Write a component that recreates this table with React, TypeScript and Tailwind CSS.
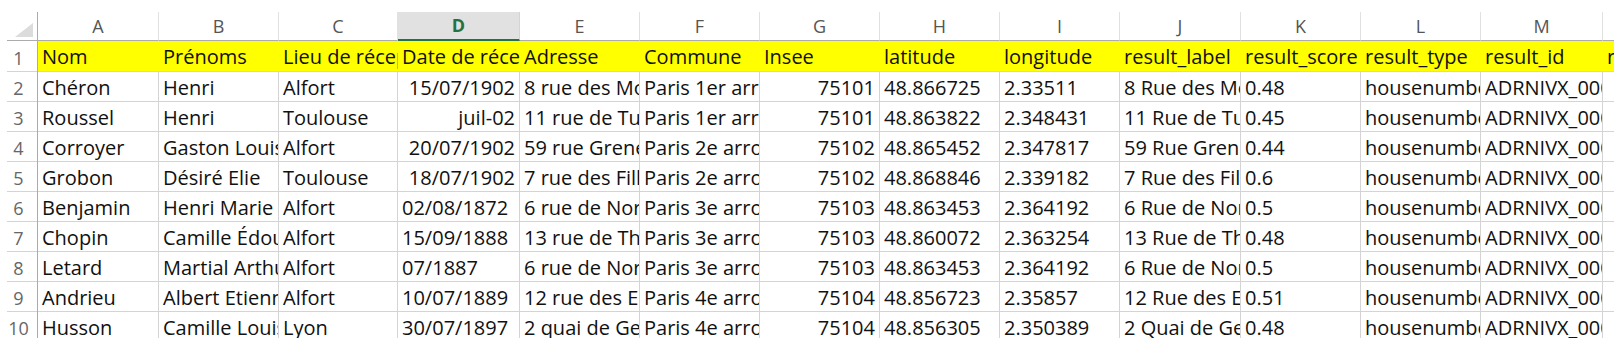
import React from "react";

// Excel-like sheet: geocoded list of names / addresses

type Cell = { v: string; right?: boolean };

const COLS = [
  { key: "A", w: "w-[121px]" },
  { key: "B", w: "w-[120px]" },
  { key: "C", w: "w-[119px]" },
  { key: "D", w: "w-[122px]" },
  { key: "E", w: "w-[120px]" },
  { key: "F", w: "w-[120px]" },
  { key: "G", w: "w-[120px]" },
  { key: "H", w: "w-[120px]" },
  { key: "I", w: "w-[120px]" },
  { key: "J", w: "w-[121px]" },
  { key: "K", w: "w-[120px]" },
  { key: "L", w: "w-[120px]" },
  { key: "M", w: "w-[122px]" },
];

const HEADERS = [
  "Nom",
  "Prénoms",
  "Lieu de réception",
  "Date de réception",
  "Adresse",
  "Commune",
  "Insee",
  "latitude",
  "longitude",
  "result_label",
  "result_score",
  "result_type",
  "result_id",
];

const l = (v: string): Cell => ({ v });
const r = (v: string): Cell => ({ v, right: true });

const ROWS: Cell[][] = [
  [l("Chéron"), l("Henri"), l("Alfort"), r("15/07/1902"), l("8 rue des Moulins"), l("Paris 1er arrondissement"), r("75101"), l("48.866725"), l("2.33511"), l("8 Rue des Moulins 75001 Paris"), l("0.48"), l("housenumber"), l("ADRNIVX_0000000270")],
  [l("Roussel"), l("Henri"), l("Toulouse"), r("juil-02"), l("11 rue de Turbigo"), l("Paris 1er arrondissement"), r("75101"), l("48.863822"), l("2.348431"), l("11 Rue de Turbigo 75001 Paris"), l("0.45"), l("housenumber"), l("ADRNIVX_0000000271")],
  [l("Corroyer"), l("Gaston Louis"), l("Alfort"), r("20/07/1902"), l("59 rue Greneta"), l("Paris 2e arrondissement"), r("75102"), l("48.865452"), l("2.347817"), l("59 Rue Greneta 75002 Paris"), l("0.44"), l("housenumber"), l("ADRNIVX_0000000272")],
  [l("Grobon"), l("Désiré Elie"), l("Toulouse"), r("18/07/1902"), l("7 rue des Filles Saint-Thomas"), l("Paris 2e arrondissement"), r("75102"), l("48.868846"), l("2.339182"), l("7 Rue des Filles Saint-Thomas 75002 Paris"), l("0.6"), l("housenumber"), l("ADRNIVX_0000000273")],
  [l("Benjamin"), l("Henri Marie"), l("Alfort"), l("02/08/1872"), l("6 rue de Normandie"), l("Paris 3e arrondissement"), r("75103"), l("48.863453"), l("2.364192"), l("6 Rue de Normandie 75003 Paris"), l("0.5"), l("housenumber"), l("ADRNIVX_0000000274")],
  [l("Chopin"), l("Camille Édouard"), l("Alfort"), l("15/09/1888"), l("13 rue de Thorigny"), l("Paris 3e arrondissement"), r("75103"), l("48.860072"), l("2.363254"), l("13 Rue de Thorigny 75003 Paris"), l("0.48"), l("housenumber"), l("ADRNIVX_0000000275")],
  [l("Letard"), l("Martial Arthur"), l("Alfort"), l("07/1887"), l("6 rue de Normandie"), l("Paris 3e arrondissement"), r("75103"), l("48.863453"), l("2.364192"), l("6 Rue de Normandie 75003 Paris"), l("0.5"), l("housenumber"), l("ADRNIVX_0000000274")],
  [l("Andrieu"), l("Albert Etienne"), l("Alfort"), l("10/07/1889"), l("12 rue des Ecouffes"), l("Paris 4e arrondissement"), r("75104"), l("48.856723"), l("2.35857"), l("12 Rue des Ecouffes 75004 Paris"), l("0.51"), l("housenumber"), l("ADRNIVX_0000000276")],
  [l("Husson"), l("Camille Louis"), l("Lyon"), l("30/07/1897"), l("2 quai de Gesvres"), l("Paris 4e arrondissement"), r("75104"), l("48.856305"), l("2.350389"), l("2 Quai de Gesvres 75004 Paris"), l("0.48"), l("housenumber"), l("ADRNIVX_0000000277")],
];

function RowHead({ n, h }: { n: number; h: string }) {
  return (
    <div className={`w-[38px] ${h} shrink-0 flex flex-col border-r border-[#ababab]`}>
      <div className="flex-1 flex items-end justify-center pb-[3px] text-[18px] leading-[20px] text-[#666666]">
        {n}
      </div>
      <div className="ml-[7px] h-px bg-[#d4d4d4]" />
    </div>
  );
}

export default function App() {
  return (
    <div className="w-[1614px] h-[348px] bg-white pt-[12px] overflow-hidden font-['Open_Sans',sans-serif] text-[#111111]">
      <div className="h-[326px] overflow-hidden">
        {/* column letters */}
        <div className="flex h-[29px]">
          <div className="w-[38px] shrink-0 flex flex-col border-r border-[#ababab]">
            <div className="flex-1 flex items-end justify-end pr-[4px] pb-[3px]">
              <svg width="18" height="14" viewBox="0 0 18 14">
                <polygon points="18,0 18,14 0,14" fill="#dcdcdc" />
              </svg>
            </div>
            <div className="ml-[7px] h-px bg-[#ababab]" />
          </div>
          {COLS.map((c) =>
            c.key === "D" ? (
              <div
                key={c.key}
                className={`${c.w} shrink-0 flex items-center justify-center bg-[#e1e1e1] border-r border-[#d4d4d4] border-b-2 border-b-[#217346] text-[18px] font-bold text-[#217346]`}
              >
                {c.key}
              </div>
            ) : (
              <div
                key={c.key}
                className={`${c.w} shrink-0 flex items-center justify-center border-r border-[#e1e1e1] border-b border-b-[#ababab] text-[18px] text-[#555555]`}
              >
                {c.key}
              </div>
            )
          )}
          <div className="flex-1 border-b border-[#ababab]" />
        </div>

        {/* header row, yellow */}
        <div className="flex h-[31px]">
          <RowHead n={1} h="h-[31px]" />
          {HEADERS.map((t, i) => (
            <div
              key={t}
              className={`${COLS[i].w} shrink-0 flex items-end overflow-hidden whitespace-nowrap bg-[#ffff00] border-b border-[#d4d4d4] pl-[4px] pb-[4px] text-[20px] leading-[20px]`}
            >
              {t}
            </div>
          ))}
          <div className="flex-1 flex items-end overflow-hidden whitespace-nowrap bg-[#ffff00] border-b border-[#d4d4d4] pl-[4px] pb-[4px] text-[20px] leading-[20px]">
            result_city
          </div>
        </div>

        {/* data rows */}
        {ROWS.map((row, ri) => (
          <div key={ri} className="flex h-[30px]">
            <RowHead n={ri + 2} h="h-[30px]" />
            {row.map((cell, ci) => (
              <div
                key={ci}
                className={`${COLS[ci].w} shrink-0 flex items-end overflow-hidden whitespace-nowrap border-r border-b border-[#d4d4d4] pb-[3px] text-[20px] leading-[20px] ${
                  cell.right ? "justify-end pr-[4px]" : "pl-[4px]"
                }`}
              >
                {cell.v}
              </div>
            ))}
            <div className="flex-1 border-b border-[#d4d4d4]" />
          </div>
        ))}
      </div>
    </div>
  );
}
